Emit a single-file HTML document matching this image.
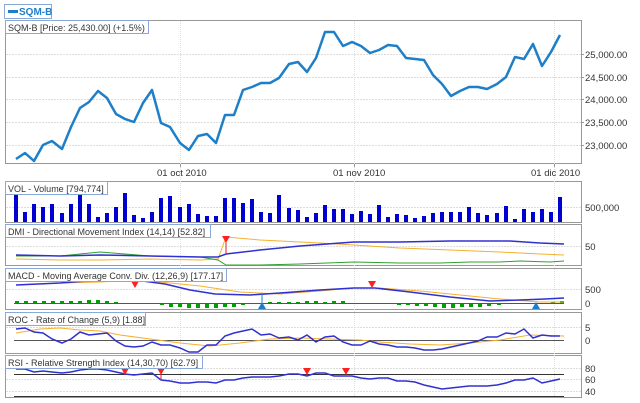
<!DOCTYPE html>
<html><head><meta charset="utf-8"><style>
body{margin:0;background:#fff;width:640px;height:403px;overflow:hidden}
svg{display:block;font-family:"Liberation Sans",sans-serif}
.ax{font-size:9.5px;fill:#333}
.tl{font-size:9px;fill:#333}
</style></head><body>
<svg width="640" height="403" viewBox="0 0 640 403">
<rect x="4.5" y="4.5" width="47" height="14" fill="#fff" stroke="#8aa8d8"/>
<line x1="8" y1="11.5" x2="18" y2="11.5" stroke="#1e7fc8" stroke-width="3"/>
<text x="19" y="15" font-size="10" font-weight="bold" fill="#1e7fc8">SQM-B</text>

<g fill="none" stroke="#999">
<rect x="5.5" y="20.5" width="576" height="143"/>
<rect x="5.5" y="181.5" width="576" height="41"/>
<rect x="5.5" y="224.5" width="576" height="41"/>
<rect x="5.5" y="268.5" width="576" height="41"/>
<rect x="5.5" y="312.5" width="576" height="41"/>
<rect x="5.5" y="355.5" width="576" height="42"/>
</g>
<g stroke="#ddd" stroke-dasharray="1,1">
<line x1="180.5" y1="21" x2="180.5" y2="397"/>
<line x1="354.5" y1="21" x2="354.5" y2="397"/>
<line x1="554.5" y1="21" x2="554.5" y2="397"/>
</g>
<g stroke="#999"><line x1="180.5" y1="164" x2="180.5" y2="167"/><line x1="354.5" y1="164" x2="354.5" y2="167"/><line x1="554.5" y1="164" x2="554.5" y2="167"/></g>
<g stroke="#ddd" stroke-dasharray="2,1">
<line x1="6" y1="54.5" x2="581" y2="54.5"/><line x1="6" y1="77.5" x2="581" y2="77.5" stroke="#eedcb0"/><line x1="6" y1="99.5" x2="581" y2="99.5" stroke="#eedcb0"/><line x1="6" y1="122.5" x2="581" y2="122.5"/><line x1="6" y1="145.5" x2="581" y2="145.5"/>
<line x1="6" y1="207.5" x2="581" y2="207.5"/>
<line x1="6" y1="246.5" x2="581" y2="246.5"/>
<line x1="6" y1="289.5" x2="581" y2="289.5"/>
<line x1="6" y1="327.5" x2="581" y2="327.5"/>
<line x1="6" y1="368.5" x2="581" y2="368.5"/>
<line x1="6" y1="379.5" x2="581" y2="379.5"/>
<line x1="6" y1="391.5" x2="581" y2="391.5"/>
</g>
<g class="ax">
<text x="585" y="58">25,000.00</text><text x="585" y="81">24,500.00</text><text x="585" y="103">24,000.00</text><text x="585" y="126">23,500.00</text><text x="585" y="149">23,000.00</text>
<text x="157" y="176">01 oct 2010</text><text x="333" y="176">01 nov 2010</text><text x="531" y="176">01 dic 2010</text>
<text x="585" y="211">500,000</text>
<text x="585" y="250">50</text>
<text x="585" y="293">500</text><text x="585" y="307">0</text>
<text x="585" y="331">5</text><text x="585" y="344">0</text>
<text x="585" y="372">80</text><text x="585" y="383">60</text><text x="585" y="395">40</text>
</g>
<g stroke="#999"><line x1="581" y1="54.5" x2="584" y2="54.5"/><line x1="581" y1="77.5" x2="584" y2="77.5"/><line x1="581" y1="99.5" x2="584" y2="99.5"/><line x1="581" y1="122.5" x2="584" y2="122.5"/><line x1="581" y1="145.5" x2="584" y2="145.5"/></g>

<polyline fill="none" stroke="#1e7fc8" stroke-width="2.5" stroke-linejoin="round" points="16,159 25,153 34,161 43,145 52,141 62,149 71,127 80,108 89,102 98,91 107,98 116,114 125,119 134,122 143,103 152,90 161,123 170,127 180,143 189,150 198,136 207,134 216,143 225,115 234,115 243,90 252,87 261,83 270,83 279,78 289,64 298,62 307,72 316,58 325,32 334,32 343,46 352,42 361,46 370,53 379,50 388,45 397,46 406,58 415,59 424,60 433,75 442,84 451,96 460,91 469,87 478,87 487,89 497,84 506,77 515,57 524,59 533,44 542,66 551,52 560,35"/>

<g fill="#0000d0">
<rect x="14" y="193" width="4" height="29"/><rect x="23" y="212" width="4" height="10"/><rect x="32" y="204" width="4" height="18"/><rect x="41" y="207" width="4" height="15"/><rect x="50" y="204" width="4" height="18"/><rect x="60" y="213" width="4" height="9"/><rect x="69" y="204" width="4" height="18"/><rect x="78" y="193" width="4" height="29"/><rect x="87" y="204" width="4" height="18"/><rect x="96" y="217" width="4" height="5"/><rect x="105" y="213" width="4" height="9"/><rect x="114" y="207" width="4" height="15"/><rect x="123" y="193" width="4" height="29"/><rect x="132" y="215" width="4" height="7"/><rect x="141" y="218" width="4" height="4"/><rect x="150" y="212" width="4" height="10"/><rect x="159" y="198" width="4" height="24"/><rect x="168" y="196" width="4" height="26"/><rect x="178" y="207" width="4" height="15"/><rect x="187" y="204" width="4" height="18"/><rect x="196" y="214" width="4" height="8"/><rect x="205" y="216" width="4" height="6"/><rect x="214" y="216" width="4" height="6"/><rect x="223" y="198" width="4" height="24"/><rect x="232" y="198" width="4" height="24"/><rect x="241" y="203" width="4" height="19"/><rect x="250" y="199" width="4" height="23"/><rect x="259" y="212" width="4" height="10"/><rect x="268" y="213" width="4" height="9"/><rect x="277" y="195" width="4" height="27"/><rect x="287" y="208" width="4" height="14"/><rect x="296" y="210" width="4" height="12"/><rect x="305" y="217" width="4" height="5"/><rect x="314" y="213" width="4" height="9"/><rect x="323" y="205" width="4" height="17"/><rect x="332" y="209" width="4" height="13"/><rect x="341" y="209" width="4" height="13"/><rect x="350" y="214" width="4" height="8"/><rect x="359" y="211" width="4" height="11"/><rect x="368" y="214" width="4" height="8"/><rect x="377" y="205" width="4" height="17"/><rect x="386" y="217" width="4" height="5"/><rect x="395" y="214" width="4" height="8"/><rect x="404" y="215" width="4" height="7"/><rect x="413" y="218" width="4" height="4"/><rect x="422" y="216" width="4" height="6"/><rect x="431" y="213" width="4" height="9"/><rect x="440" y="212" width="4" height="10"/><rect x="449" y="212" width="4" height="10"/><rect x="458" y="212" width="4" height="10"/><rect x="467" y="207" width="4" height="15"/><rect x="476" y="213" width="4" height="9"/><rect x="485" y="215" width="4" height="7"/><rect x="495" y="213" width="4" height="9"/><rect x="504" y="206" width="4" height="16"/><rect x="513" y="219" width="4" height="3"/><rect x="522" y="209" width="4" height="13"/><rect x="531" y="212" width="4" height="10"/><rect x="540" y="209" width="4" height="13"/><rect x="549" y="212" width="4" height="10"/><rect x="558" y="197" width="4" height="25"/>
</g>

<polyline fill="none" stroke="#f5b030" stroke-width="1" points="16,259 60,260 100,260 150,259 200,260 218,259 226,237 260,240 320,243 354,245 400,248 450,250 500,252 540,254 564,255"/>
<polyline fill="none" stroke="#30a030" stroke-width="1" points="16,256 60,256 100,252 150,256 200,257 218,260 226,265 260,265 300,264 354,262 400,263 440,263 470,262 500,262 520,261 550,262 564,261"/>
<polyline fill="none" stroke="#3030d0" stroke-width="1.5" points="16,255 60,256 100,255 150,256 200,257 218,257 226,254 260,250 300,246 354,242 400,242 450,241 510,241 540,243 564,244"/>
<line x1="226" y1="240" x2="226" y2="254" stroke="#e02020"/>
<polygon points="222,236 230,236 226,243" fill="#ff2020"/>

<line x1="14" y1="303.5" x2="564" y2="303.5" stroke="#555"/>
<g fill="#00a000">
<rect x="15" y="301" width="4" height="2"/><rect x="24" y="301" width="4" height="2"/><rect x="33" y="301" width="4" height="2"/><rect x="42" y="301" width="4" height="2"/><rect x="51" y="301" width="4" height="2"/><rect x="60" y="301" width="4" height="2"/><rect x="69" y="301" width="4" height="2"/><rect x="78" y="301" width="4" height="2"/><rect x="87" y="300" width="4" height="3"/><rect x="96" y="300" width="4" height="3"/><rect x="105" y="301" width="4" height="2"/><rect x="114" y="302" width="4" height="1"/>
<rect x="160" y="304" width="4" height="1"/><rect x="169" y="304" width="4" height="3"/><rect x="178" y="304" width="4" height="3"/><rect x="187" y="304" width="4" height="4"/><rect x="196" y="304" width="4" height="4"/><rect x="205" y="304" width="4" height="4"/><rect x="214" y="304" width="4" height="4"/><rect x="223" y="304" width="4" height="3"/><rect x="232" y="304" width="4" height="3"/><rect x="241" y="304" width="4" height="1"/>
<rect x="268" y="302" width="4" height="1"/><rect x="277" y="302" width="4" height="1"/><rect x="287" y="302" width="4" height="1"/><rect x="296" y="302" width="4" height="1"/><rect x="305" y="301" width="4" height="2"/><rect x="314" y="301" width="4" height="2"/><rect x="323" y="302" width="4" height="1"/><rect x="332" y="301" width="4" height="2"/><rect x="341" y="301" width="4" height="2"/>
<rect x="397" y="304" width="4" height="1"/><rect x="406" y="304" width="4" height="1"/><rect x="415" y="304" width="4" height="2"/><rect x="424" y="304" width="4" height="2"/><rect x="433" y="304" width="4" height="3"/><rect x="442" y="304" width="4" height="4"/><rect x="451" y="304" width="4" height="4"/><rect x="460" y="304" width="4" height="3"/><rect x="469" y="304" width="4" height="3"/><rect x="478" y="304" width="4" height="3"/><rect x="487" y="304" width="4" height="2"/><rect x="497" y="304" width="4" height="1"/>
<rect x="551" y="302" width="4" height="1"/><rect x="560" y="301" width="4" height="2"/>
</g>
<polyline fill="none" stroke="#f5b030" stroke-width="1" points="16,285 60,283 100,282 135,280 160,282 200,286 240,292 280,294 320,291 354,288 380,288 420,291 460,295 500,299 540,302 564,302"/>
<polyline fill="none" stroke="#3030d0" stroke-width="1.5" points="16,285 60,283 100,280 135,280 165,284 190,290 215,294 250,295 280,293 320,290 354,288 375,288 410,292 450,297 490,301 520,300 545,299 564,298"/>
<polygon points="131,281 139,281 135,288" fill="#ff2020"/>
<polygon points="368,281 376,281 372,288" fill="#ff2020"/>
<line x1="262" y1="294" x2="262" y2="304" stroke="#1e7fc8"/>
<polygon points="258,309 266,309 262,302" fill="#1e7fc8"/>
<polygon points="532,309 540,309 536,302" fill="#1e7fc8"/>

<line x1="14" y1="340.5" x2="564" y2="340.5" stroke="#555"/>
<polyline fill="none" stroke="#f5b030" stroke-width="1" points="16,333 40,329 60,328 80,330 100,331 120,335 150,339 180,343 210,346 240,343 270,339 300,338 330,339 360,340 380,342 410,344 440,345 470,343 500,340 530,335 564,336"/>
<polyline fill="none" stroke="#3030d0" stroke-width="1.5" points="16,329 25,328 34,332 43,333 52,339 62,343 71,339 80,332 89,335 98,334 107,333 116,341 125,346 134,347 143,346 152,342 161,345 170,345 180,348 189,352 198,352 207,345 216,345 225,336 234,333 243,331 252,329 261,335 270,334 279,338 289,337 298,340 307,335 316,342 325,337 334,336 343,342 352,345 361,345 370,341 379,344 388,345 397,347 406,347 415,348 424,350 433,350 442,349 451,347 460,345 469,343 478,341 487,337 497,337 506,333 515,334 524,329 533,338 542,335 551,336 560,336"/>

<line x1="14" y1="374.5" x2="564" y2="374.5" stroke="#333"/>
<line x1="14" y1="396.5" x2="564" y2="396.5" stroke="#333"/>
<polyline fill="none" stroke="#3030d0" stroke-width="1.5" points="16,369 25,369 34,372 43,371 52,372 62,373 71,372 80,370 89,369 98,369 107,370 116,372 125,374 134,375 143,374 152,373 161,380 170,381 180,383 189,383 198,382 207,382 216,383 225,380 234,380 243,378 252,377 261,377 270,377 279,376 289,374 298,374 307,376 316,373 325,373 334,376 343,376 352,376 361,378 370,379 379,378 388,378 397,381 406,381 415,382 424,385 433,387 442,389 451,388 460,387 469,386 478,386 487,386 497,385 506,383 515,380 524,380 533,378 542,383 551,381 560,379"/>
<polygon points="121,368 129,368 125,375" fill="#ff2020"/>
<line x1="161" y1="372" x2="161" y2="380" stroke="#e02020"/>
<polygon points="157,368 165,368 161,375" fill="#ff2020"/>
<polygon points="303,368 311,368 307,375" fill="#ff2020"/>
<polygon points="342,368 350,368 346,375" fill="#ff2020"/>

<g fill="#fff" stroke="#8aa8d8">
<rect x="5.5" y="20.5" width="143" height="13"/>
<rect x="5.5" y="181.5" width="102" height="13"/>
<rect x="5.5" y="224.5" width="205" height="13"/>
<rect x="5.5" y="268.5" width="221" height="13"/>
<rect x="5.5" y="312.5" width="140" height="13"/>
<rect x="5.5" y="355.5" width="197" height="13"/>
</g>
<g class="tl">
<text x="8" y="31">SQM-B [Price: 25,430.00] (+1.5%)</text>
<text x="8" y="192">VOL - Volume [794,774]</text>
<text x="8" y="235">DMI - Directional Movement Index (14,14) [52.82]</text>
<text x="8" y="279">MACD - Moving Average Conv. Div. (12,26,9) [177.17]</text>
<text x="8" y="323">ROC - Rate of Change (5,9) [1.88]</text>
<text x="8" y="366">RSI - Relative Strength Index (14,30,70) [62.79]</text>
</g>
</svg>
</body></html>
